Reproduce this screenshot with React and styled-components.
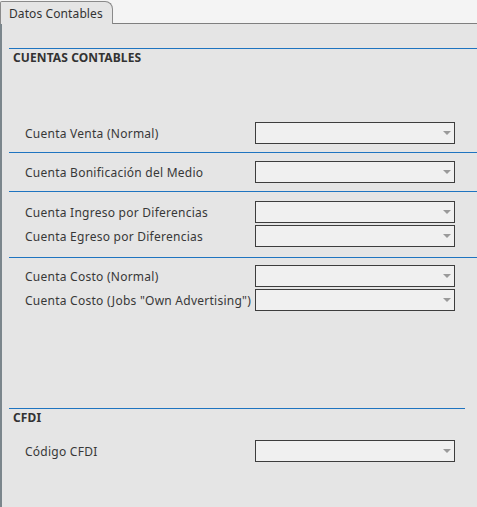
import React from "react";
import styled, { createGlobalStyle } from "styled-components";

const Global = createGlobalStyle`
  html, body { margin: 0; padding: 0; background: #e5e5e5; }
  body { font-family: "Noto Sans", "DejaVu Sans", sans-serif; font-size: 12px; color: #3a3a3a; }
`;

const Page = styled.div`
  width: 477px;
  height: 507px;
  display: flex;
  flex-direction: column;
  overflow: hidden;
`;

const TabBar = styled.div`
  height: 23px;
  background: #f4f4f4;
  border-bottom: 1px solid #7f7f7f;
  display: flex;
  align-items: flex-end;
  flex-shrink: 0;
`;

const Tab = styled.div`
  width: 113px;
  height: 23px;
  margin-bottom: -1px;
  box-sizing: border-box;
  background: #e5e5e5;
  border: 1px solid #8a8a8a;
  border-bottom: none;
  border-top-left-radius: 2px;
  border-top-right-radius: 8px;
  padding: 3px 0 0 8px;
  font-size: 12px;
  letter-spacing: 0.1px;
  color: #333;
  white-space: nowrap;
`;

const Panel = styled.div`
  flex: 1;
  border-left: 2px solid #7b868c;
  padding-left: 7px;
  padding-top: 24px;
  display: flex;
  flex-direction: column;
`;

const Section = styled.div`
  border-top: 1px solid #1f74c0;
  margin-right: ${(p) => p.$mr || 0}px;
  padding-top: ${(p) => p.$pt || 0}px;
  padding-bottom: ${(p) => p.$pb || 0}px;
  display: flex;
  flex-direction: column;
  gap: 2px;
`;

const Header = styled.div`
  height: 18px;
  line-height: 18px;
  padding-left: 4px;
  font-weight: bold;
  font-size: 12px;
  letter-spacing: 0.1px;
  color: #333;
  margin-bottom: ${(p) => p.$mb || 0}px;
`;

const Row = styled.div`
  display: flex;
  align-items: center;
  height: 22px;
`;

const Label = styled.div`
  width: 230px;
  padding-left: 16px;
  white-space: nowrap;
  letter-spacing: 0.25px;
  color: #383838;
`;

const Select = styled.div`
  width: 200px;
  height: 22px;
  box-sizing: border-box;
  border: 1px solid #3d3d3d;
  background: #f0f0f0;
  position: relative;
  &::after {
    content: "";
    position: absolute;
    right: 3px;
    top: 8px;
    width: 0;
    height: 0;
    border-left: 4px solid transparent;
    border-right: 4px solid transparent;
    border-top: 4px solid #9a9a9a;
  }
`;

const Field = ({ label }) => (
  <Row>
    <Label>{label}</Label>
    <Select />
  </Row>
);

export default function App() {
  return (
    <Page>
      <Global />
      <TabBar>
        <Tab>Datos Contables</Tab>
      </TabBar>
      <Panel>
        <Section $pb={8}>
          <Header $mb={53}>CUENTAS CONTABLES</Header>
          <Field label="Cuenta Venta (Normal)" />
        </Section>
        <Section $pt={8} $pb={8}>
          <Field label="Cuenta Bonificación del Medio" />
        </Section>
        <Section $pt={9} $pb={10}>
          <Field label="Cuenta Ingreso por Diferencias" />
          <Field label="Cuenta Egreso por Diferencias" />
        </Section>
        <Section $pt={7} $pb={97}>
          <Field label="Cuenta Costo (Normal)" />
          <Field label={'Cuenta Costo (Jobs "Own Advertising")'} />
        </Section>
        <Section $mr={12}>
          <Header $mb={11}>CFDI</Header>
          <Field label="Código CFDI" />
        </Section>
      </Panel>
    </Page>
  );
}
